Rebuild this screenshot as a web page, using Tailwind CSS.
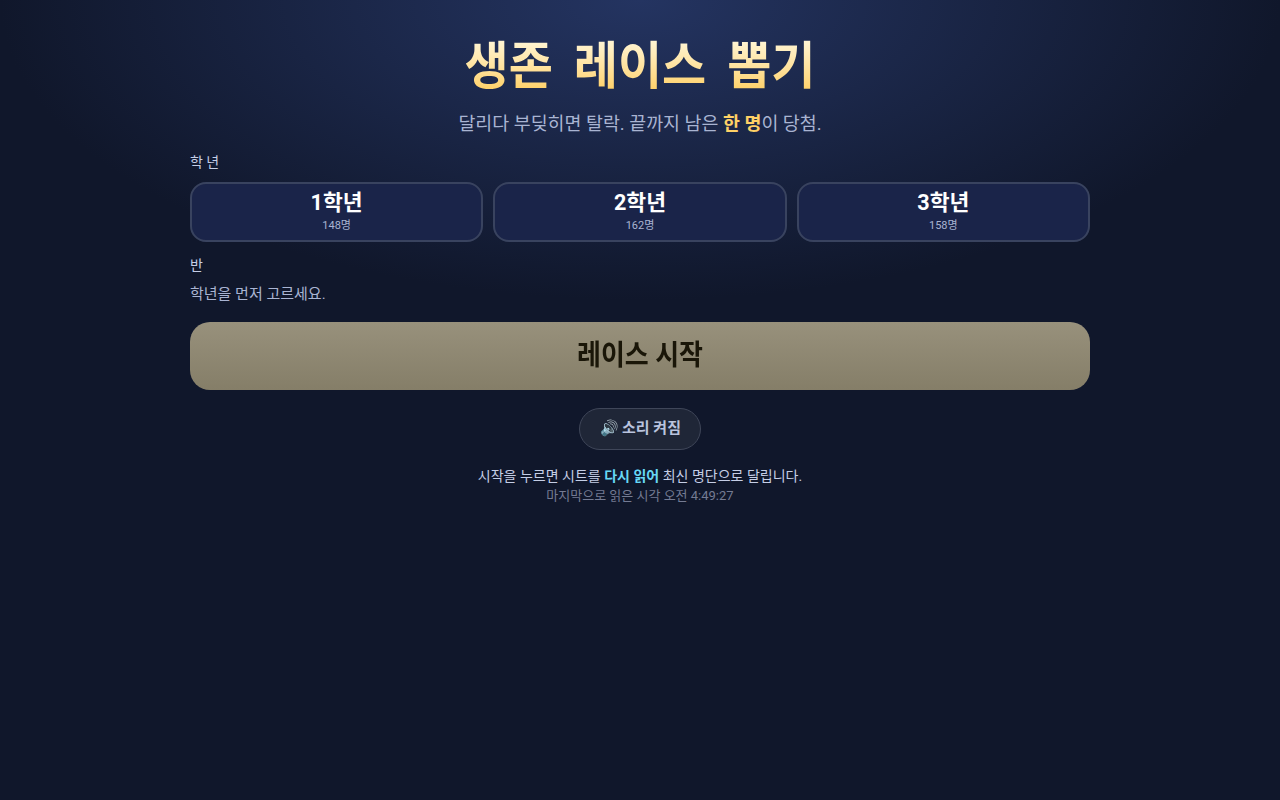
<!DOCTYPE html>
<html lang="ko">
<head>
<meta charset="UTF-8">
<title>생존 레이스 뽑기</title>
<script src="https://cdn.jsdelivr.net/npm/@tailwindcss/browser@4"></script>
</head>
<body class="min-h-screen bg-[#10172b] bg-[radial-gradient(ellipse_640px_300px_at_50%_0,#243461_0%,#10172b_100%)] bg-no-repeat font-['Roboto','Noto_Sans_CJK_KR',sans-serif] text-[#c5cee6]">
<main class="w-[900px] mx-auto pt-[31px] flex flex-col">
  <h1 class="text-center text-[48px] leading-[72px] font-bold [word-spacing:9px] scale-y-[1.06]"><span class="text-transparent bg-clip-text bg-gradient-to-b from-[#fff8dc] to-[#ffcc55]">생존 레이스 뽑기</span></h1>
  <p class="mt-[7px] text-center text-[18.4px] leading-[28px] text-[#a9b4d2]">달리다 부딪히면 탈락. 끝까지 남은 <b class="text-[#ffd166]">한 명</b>이 당첨.</p>

  <div class="mt-[14px] text-[14px] leading-[20px]">학 년</div>
  <div class="mt-[10px] grid grid-cols-3 gap-[10px]">
    <button class="h-[60px] pb-[2px] rounded-[16px] border-2 border-[#39435f] bg-[#1a2449] text-white flex flex-col items-center justify-center">
      <span class="text-[21.6px] leading-[28px] font-bold">1학년</span>
      <span class="mt-[1px] text-[11px] leading-[16px] text-[#a9b4d2]">148명</span>
    </button>
    <button class="h-[60px] pb-[2px] rounded-[16px] border-2 border-[#39435f] bg-[#1a2449] text-white flex flex-col items-center justify-center">
      <span class="text-[21.6px] leading-[28px] font-bold">2학년</span>
      <span class="mt-[1px] text-[11px] leading-[16px] text-[#a9b4d2]">162명</span>
    </button>
    <button class="h-[60px] pb-[2px] rounded-[16px] border-2 border-[#39435f] bg-[#1a2449] text-white flex flex-col items-center justify-center">
      <span class="text-[21.6px] leading-[28px] font-bold">3학년</span>
      <span class="mt-[1px] text-[11px] leading-[16px] text-[#a9b4d2]">158명</span>
    </button>
  </div>

  <div class="mt-[13px] text-[14px] leading-[20px]">반</div>
  <p class="mt-[9px] text-[15px] leading-[20px] text-[#a9b4d2]">학년을 먼저 고르세요.</p>

  <button class="mt-[18px] h-[68px] pb-[2px] rounded-[20px] bg-gradient-to-b from-[#98917c] to-[#857e68] text-[#1a1608] text-[26px] font-bold"><span class="inline-block scale-y-[1.1]">레이스 시작</span></button>

  <button class="mt-[18px] mx-auto h-[42px] pl-[20px] pr-[19px] pb-[1px] flex items-center gap-[3px] rounded-full border border-[#3f4659] bg-[#1f2637] text-[15px] font-bold text-[#b9c3de]"><span>🔊</span><span>소리 켜짐</span></button>

  <p class="mt-[16px] text-center text-[14px] leading-[20px]">시작을 누르면 시트를 <b class="text-[#67d8f5]">다시 읽어</b> 최신 명단으로 달립니다.</p>
  <p class="mt-[1px] text-center text-[13px] leading-[18px] text-[#747b93]">마지막으로 읽은 시각 오전 4:49:27</p>
</main>
</body>
</html>
